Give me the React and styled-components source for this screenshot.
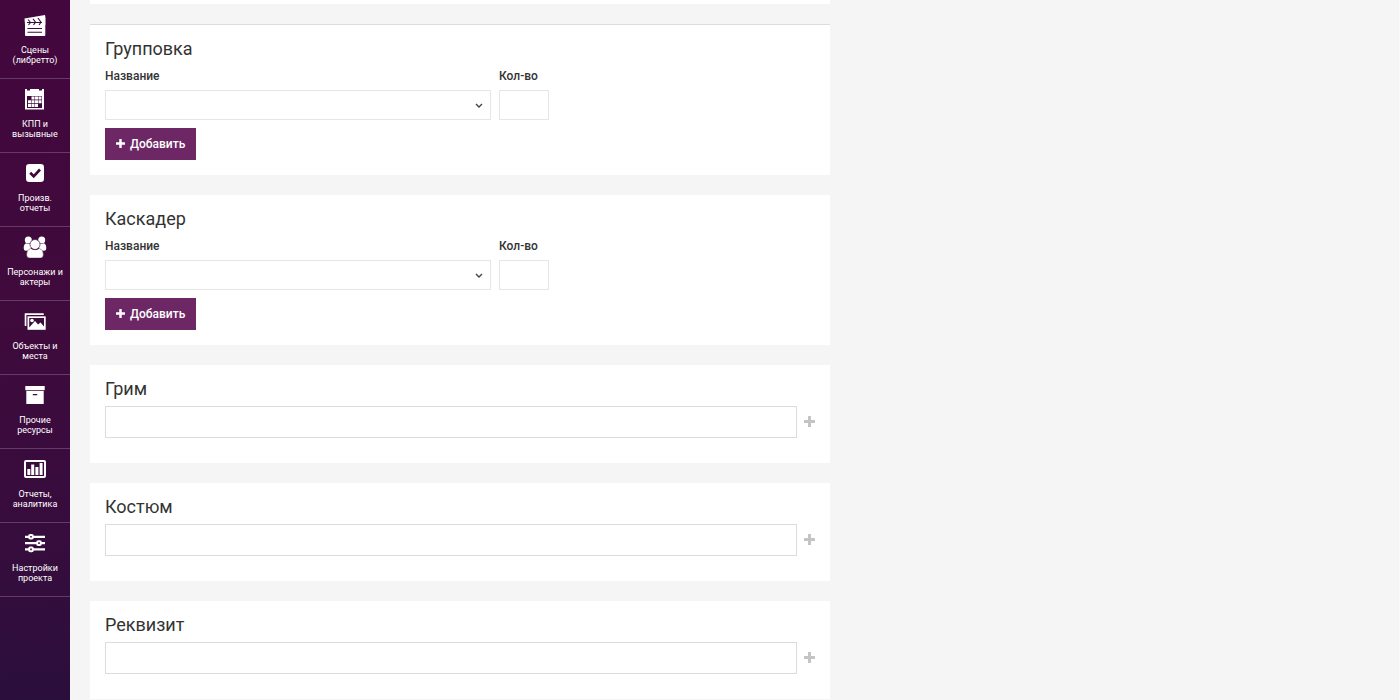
import React from 'react'
import styled, { createGlobalStyle } from 'styled-components'

const ink = '#3e0b3d'

const GlobalStyle = createGlobalStyle`
  * {
    box-sizing: border-box;
  }
  body {
    margin: 0;
    background: #f5f5f5;
    color: #333;
    font-family: Roboto, 'Liberation Sans', sans-serif;
    font-size: 12px;
  }
`
const Page = styled.div`
  display: flex;
  min-height: 100vh;
`
const Sidebar = styled.nav`
  flex: 0 0 70px;
  padding-top: 5px;
  background: linear-gradient(175deg, #43073d 0%, #3f0a3c 45%, #350d3d 80%, #2a0e3c 100%);
`
const SidebarLink = styled.a`
  display: flex;
  flex-direction: column;
  align-items: center;
  gap: 8px;
  height: 74px;
  padding-top: 8px;
  border-bottom: 1px solid #66396a;
  color: #fff;
  font-size: 9px;
  font-weight: 400;
  line-height: 10px;
  text-align: center;
  text-decoration: none;
`
const SidebarIcon = styled.svg`
  display: block;
  width: 24px;
  height: 24px;
  fill: #fff;
`
const Main = styled.main`
  flex: 1;
  padding: 0 20px;
  border-right: 1px solid #f9f9f9;
`
const Form = styled.form`
  display: flex;
  flex-direction: column;
  gap: 20px;
  max-width: 740px;
`
const PanelEnd = styled.div`
  height: 4px;
  background: #fff;
`
const Panel = styled.section`
  padding: 15px 15px ${props => (props.$roomy ? '25px' : '15px')};
  border-top: ${props => (props.$lined ? '1px solid #ddd' : 'none')};
  background: #fff;
`
const Title = styled.h2`
  margin: 0 0 8px;
  font-size: 18px;
  font-weight: 400;
  line-height: 18px;
`
const Fields = styled.div`
  display: flex;
  gap: 8px;
  margin-bottom: 8px;
`
const Field = styled.div`
  flex: 0 1 ${props => props.$width};
`
const Label = styled.label`
  display: block;
  margin-bottom: 4px;
  font-weight: 500;
  line-height: 20px;
`
const SelectBox = styled.div`
  position: relative;
`
const Select = styled.select`
  display: block;
  width: 100%;
  height: 30px;
  padding: 0 24px 0 8px;
  border: 1px solid #e5e6e7;
  border-radius: 0;
  background: #fff;
  color: inherit;
  font: inherit;
  appearance: none;
`
const Arrow = styled.svg`
  position: absolute;
  top: 12px;
  right: 8px;
  width: 8px;
  height: 8px;
  fill: none;
  stroke: #444;
  stroke-width: 1.4;
  pointer-events: none;
`
const Input = styled.input`
  display: block;
  width: 100%;
  height: ${props => (props.$tall ? '32px' : '30px')};
  padding: 0 8px;
  border: 1px solid ${props => (props.$tall ? '#dcdcdf' : '#e5e6e7')};
  border-radius: 0;
  background: #fff;
  color: inherit;
  font: inherit;
`
const AddButton = styled.button`
  display: flex;
  align-items: center;
  gap: 5px;
  height: 32px;
  padding: 0 11px;
  border: 0;
  background: #6d2765;
  color: #fff;
  font: inherit;
  font-weight: 500;
  cursor: pointer;
`
const Row = styled.div`
  display: flex;
  align-items: center;
  gap: 7px;
`
const PlusButton = styled.button`
  display: flex;
  padding: 0;
  border: 0;
  background: none;
  color: #c4c4c6;
  cursor: pointer;
`

const Plus = ({ size }) => (
  <svg width={size} height={size + 1} viewBox="0 0 11 12" preserveAspectRatio="xMinYMin" fill="currentColor" aria-hidden="true">
    <path d="M4.3 0h2.400q.3 0 .3.3v3.700h3.700q.3 0 .3.3v2.400q0 .3-.3.3h-3.700v3.700q0 .3-.3.3h-2.400q-.3 0-.3-.3v-3.700h-3.700q-.3 0-.3-.3v-2.400q0-.3.3-.3h3.700v-3.700q0-.3.3-.3z" />
  </svg>
)

const icons = {
  scenes: (
    <>
      <path d="M1.500 5.500l20.500-3.500.5 3v7h-.2v10q0 1-1 1h-18.300q-1 0-1-1v-10z" />
      <path
        d="M4 9.500h15M5 6.500l2.500 3-2 2.500M10 5.800l2.500 3.500-2 2.500M15 5l3 4.300-2 2.700"
        fill="none"
        stroke={ink}
        strokeWidth="1.100"
      />
      <path d="M4.500 15h14.500v1.100h-14.500zM4.500 18.700h14.500v1.100h-14.500z" fill={ink} />
    </>
  ),
  calendar: (
    <>
      <path d="M2 2h2v1.500h3v-1.500h9v1.500h3v-1.500h2v20.500h-19z" />
      <path d="M4 9h15v12h-15z" fill={ink} />
      <path d="M8.500 9.500h3v3h-3zM12 9.500h3v3h-3zM15.500 9.500h3v3h-3zM5 13.300h3v3h-3zM8.500 13.300h3v3h-3zM12 13.300h3v3h-3zM15.500 13.300h3v3h-3zM5 17h3v3h-3zM8.500 17h3v3h-3zM12 17h3v3h-3z" />
    </>
  ),
  check: (
    <>
      <rect x="3" y="3" width="18" height="18" rx="3.300" />
      <path d="M7.200 11.800l3.500 3.500 6.300-6.800" fill="none" stroke={ink} strokeWidth="2.700" />
    </>
  ),
  people: (
    <>
      <circle cx="5.300" cy="5" r="3.500" />
      <circle cx="18.700" cy="5" r="3.500" />
      <path d="M3 8.200q2.500 1.500 5 0v7.500h-5q-2.300 0-2.300-2.500 0-4 2.300-5zM21 8.200q-2.500 1.500-5 0v7.500h5q2.300 0 2.300-2.500 0-4-2.300-5z" />
      <path
        d="M7.500 13.500q4.500 2.500 9 0 3.900 1 3.900 6 0 3.500-3 3.500h-10.800q-3 0-3-3.500 0-5 3.900-6z"
        stroke={ink}
        strokeWidth=".4"
      />
      <circle cx="12" cy="9.500" r="5" stroke={ink} strokeWidth=".7" />
    </>
  ),
  images: (
    <>
      <path d="M1.700 4.300h19v1.700h-17.300v11h-1.700z" />
      <path d="M4.500 7.300h18.200v13.500h-18.200z" />
      <path d="M6.200 9h14.800v8.500l-3.500-4-2.500 2-3-3.500-5.800 6.500z" fill={ink} />
      <circle cx="9" cy="11.500" r="1.800" />
    </>
  ),
  archive: (
    <>
      <path d="M2.300 3h19.400v4.200h-19.400zM3.300 8h17.400v12.500q0 .5-.5.5h-16.400q-.5 0-.5-.5z" />
      <path d="M9.800 11h4.400v1.300h-4.400z" fill={ink} />
    </>
  ),
  chart: (
    <>
      <rect x="2" y="4" width="20" height="16" rx="1" fill="none" stroke="#fff" strokeWidth="2" />
      <path d="M4.300 12h3v6h-3zM8.200 7.500h3v10.500h-3zM12.400 10h3v8h-3zM16.600 6h3v12h-3z" />
    </>
  ),
  sliders: (
    <>
      <path d="M2 4.700h20v2.300h-20zM2 11h20v2.300h-20zM2 17.300h20v2.300h-20z" />
      <g fill={ink} stroke="#fff" strokeWidth="2">
        <rect x="6.200" y="4" width="3.600" height="3.600" rx="1" />
        <rect x="14.200" y="10.300" width="3.600" height="3.600" rx="1" />
        <rect x="6.200" y="16.600" width="3.600" height="3.600" rx="1" />
      </g>
    </>
  )
}

const menu = [
  { icon: 'scenes', lines: ['Сцены', '(либретто)'] },
  { icon: 'calendar', lines: ['КПП и', 'вызывные'] },
  { icon: 'check', lines: ['Произв.', 'отчеты'] },
  { icon: 'people', lines: ['Персонажи и', 'актеры'] },
  { icon: 'images', lines: ['Объекты и', 'места'] },
  { icon: 'archive', lines: ['Прочие', 'ресурсы'] },
  { icon: 'chart', lines: ['Отчеты,', 'аналитика'] },
  { icon: 'sliders', lines: ['Настройки', 'проекта'] }
]

const CountPanel = ({ id, title, lined }) => (
  <Panel $lined={lined}>
    <Title>{title}</Title>
    <Fields>
      <Field $width="386px">
        <Label htmlFor={`${id}-name`}>Название</Label>
        <SelectBox>
          <Select id={`${id}-name`} defaultValue="">
            <option value="" />
          </Select>
          <Arrow viewBox="0 0 8 8" aria-hidden="true">
            <path d="M1 2l3 3 3-3" />
          </Arrow>
        </SelectBox>
      </Field>
      <Field $width="50px">
        <Label htmlFor={`${id}-count`}>Кол-во</Label>
        <Input id={`${id}-count`} type="text" />
      </Field>
    </Fields>
    <AddButton type="button">
      <Plus size={9} />
      Добавить
    </AddButton>
  </Panel>
)

const ListPanel = ({ id, title }) => (
  <Panel $roomy>
    <Title id={`${id}-title`}>{title}</Title>
    <Row>
      <Input $tall id={id} type="text" aria-labelledby={`${id}-title`} />
      <PlusButton type="button" aria-label="Добавить">
        <Plus size={11} />
      </PlusButton>
    </Row>
  </Panel>
)

const App = () => (
  <Page>
    <GlobalStyle />
    <Sidebar>
      {menu.map(item => (
        <SidebarLink key={item.icon} href="#">
          <SidebarIcon viewBox="0 0 24 24" aria-hidden="true">
            {icons[item.icon]}
          </SidebarIcon>
          <span>
            {item.lines[0]}
            <br />
            {item.lines[1]}
          </span>
        </SidebarLink>
      ))}
    </Sidebar>
    <Main>
      <Form>
        <PanelEnd />
        <CountPanel id="group" title="Групповка" lined />
        <CountPanel id="stunt" title="Каскадер" />
        <ListPanel id="makeup" title="Грим" />
        <ListPanel id="costume" title="Костюм" />
        <ListPanel id="props" title="Реквизит" />
      </Form>
    </Main>
  </Page>
)

export default App
